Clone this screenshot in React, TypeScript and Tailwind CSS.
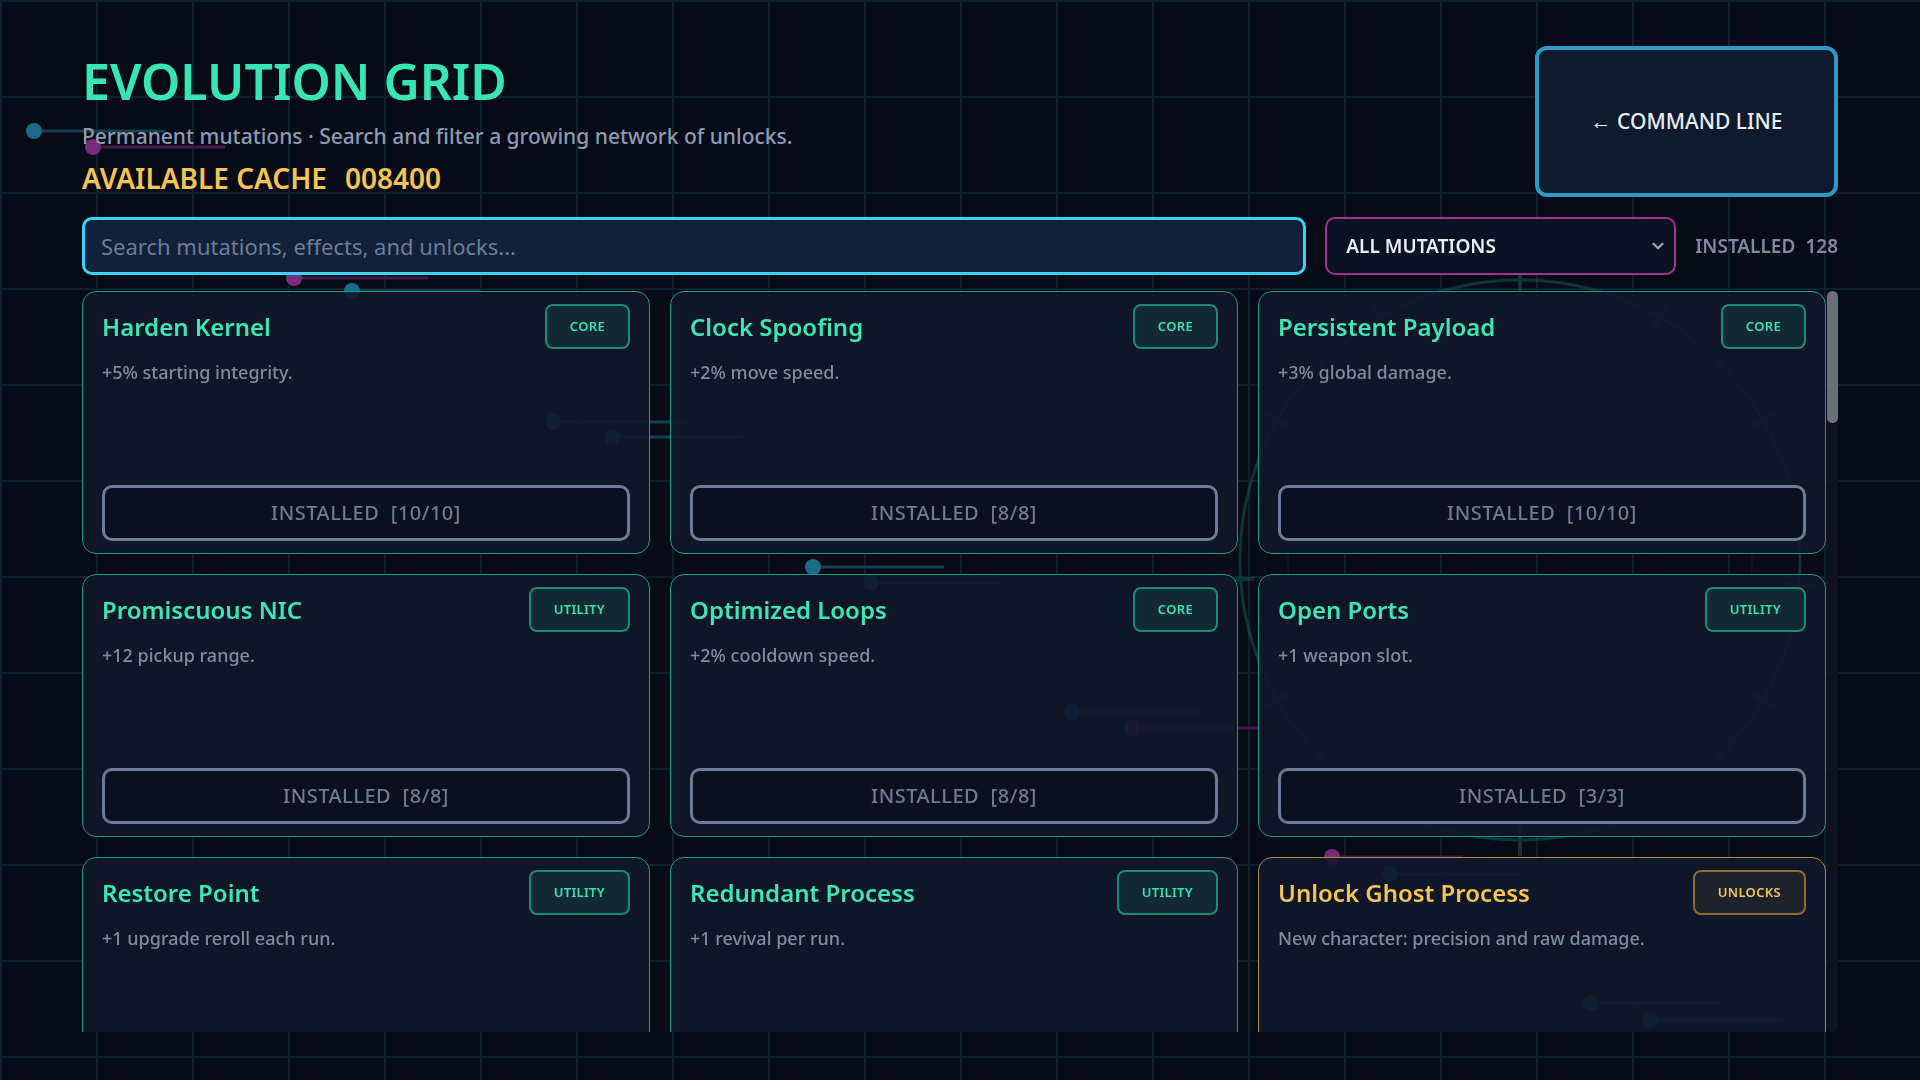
import { ChevronDown } from "lucide-react";

type Kind = "CORE" | "UTILITY" | "UNLOCKS";

interface Mutation {
  name: string;
  effect: string;
  kind: Kind;
  rank: number;
  max: number;
}

const MUTATIONS: Mutation[] = [
  { name: "Harden Kernel", effect: "+5% starting integrity.", kind: "CORE", rank: 10, max: 10 },
  { name: "Clock Spoofing", effect: "+2% move speed.", kind: "CORE", rank: 8, max: 8 },
  { name: "Persistent Payload", effect: "+3% global damage.", kind: "CORE", rank: 10, max: 10 },
  { name: "Promiscuous NIC", effect: "+12 pickup range.", kind: "UTILITY", rank: 8, max: 8 },
  { name: "Optimized Loops", effect: "+2% cooldown speed.", kind: "CORE", rank: 8, max: 8 },
  { name: "Open Ports", effect: "+1 weapon slot.", kind: "UTILITY", rank: 3, max: 3 },
  { name: "Restore Point", effect: "+1 upgrade reroll each run.", kind: "UTILITY", rank: 5, max: 5 },
  { name: "Redundant Process", effect: "+1 revival per run.", kind: "UTILITY", rank: 2, max: 2 },
  { name: "Unlock Ghost Process", effect: "New character: precision and raw damage.", kind: "UNLOCKS", rank: 1, max: 1 },
  { name: "Cache Prefetch", effect: "+4% experience gain.", kind: "CORE", rank: 10, max: 10 },
  { name: "Packet Sniffer", effect: "+5% critical chance.", kind: "CORE", rank: 6, max: 6 },
  { name: "Garbage Collector", effect: "Shards decay 10% slower.", kind: "UTILITY", rank: 4, max: 4 },
  { name: "Overclocked Bus", effect: "+3% projectile speed.", kind: "CORE", rank: 8, max: 8 },
  { name: "Unlock Root Shell", effect: "New weapon: recursive fork bomb.", kind: "UNLOCKS", rank: 1, max: 1 },
  { name: "Checksum Shield", effect: "+1 armor.", kind: "CORE", rank: 5, max: 5 },
  { name: "Heap Spray", effect: "+1 projectile count.", kind: "CORE", rank: 3, max: 3 },
  { name: "Swap Partition", effect: "+10% pickup duration.", kind: "UTILITY", rank: 4, max: 4 },
  { name: "Thread Pool", effect: "+1 orbital drone.", kind: "UTILITY", rank: 2, max: 2 },
  { name: "Unlock Daemon Mode", effect: "New stage: the abandoned mainframe.", kind: "UNLOCKS", rank: 1, max: 1 },
  { name: "Buffer Overflow", effect: "+6% area size.", kind: "CORE", rank: 6, max: 6 },
  { name: "Entropy Source", effect: "+2 luck.", kind: "UTILITY", rank: 5, max: 5 },
  { name: "Kernel Panic", effect: "+15% damage below 25% integrity.", kind: "CORE", rank: 4, max: 4 },
  { name: "Firewall Rules", effect: "-4% damage taken.", kind: "CORE", rank: 8, max: 8 },
  { name: "Load Balancer", effect: "Healing spreads to nearby drones.", kind: "UTILITY", rank: 3, max: 3 },
  { name: "Unlock Null Pointer", effect: "New character: speed and ricochets.", kind: "UNLOCKS", rank: 1, max: 1 },
  { name: "Hot Patch", effect: "+1% integrity regeneration.", kind: "CORE", rank: 10, max: 10 },
  { name: "Bit Rot", effect: "Enemies take 5% more damage over time.", kind: "CORE", rank: 5, max: 5 },
  { name: "Proxy Chain", effect: "+1 dash charge.", kind: "UTILITY", rank: 2, max: 2 },
  { name: "Zero Day", effect: "+8% damage against elites.", kind: "CORE", rank: 6, max: 6 },
  { name: "Dead Drop", effect: "+10% cache from chests.", kind: "UTILITY", rank: 5, max: 5 },
  { name: "Unlock Mirror Site", effect: "New mode: twin arenas.", kind: "UNLOCKS", rank: 1, max: 1 },
  { name: "Fork Process", effect: "+1 summon limit.", kind: "UTILITY", rank: 3, max: 3 },
  { name: "Side Channel", effect: "+3% dodge chance.", kind: "CORE", rank: 5, max: 5 },
  { name: "Rainbow Table", effect: "+1 banish each run.", kind: "UTILITY", rank: 3, max: 3 },
  { name: "Trace Route", effect: "Reveal elites on the map.", kind: "UTILITY", rank: 1, max: 1 },
  { name: "Salted Hash", effect: "+6% status effect duration.", kind: "CORE", rank: 6, max: 6 },
  { name: "Unlock Honeypot", effect: "New relic: bait beacon.", kind: "UNLOCKS", rank: 1, max: 1 },
  { name: "Race Condition", effect: "+5% attack speed.", kind: "CORE", rank: 8, max: 8 },
  { name: "Memory Leak", effect: "Enemies drop 5% more shards.", kind: "UTILITY", rank: 4, max: 4 },
  { name: "Stack Canary", effect: "Survive one fatal hit per stage.", kind: "CORE", rank: 1, max: 1 },
  { name: "Shadow Copy", effect: "+1 skip each run.", kind: "UTILITY", rank: 3, max: 3 },
  { name: "Brute Force", effect: "+10% knockback.", kind: "CORE", rank: 5, max: 5 },
  { name: "Unlock Sandbox", effect: "New mode: endless simulation.", kind: "UNLOCKS", rank: 1, max: 1 },
  { name: "Port Knocking", effect: "+1 starting shard magnet.", kind: "UTILITY", rank: 2, max: 2 },
];

const TONES: Record<Kind, { card: string; title: string; badge: string }> = {
  CORE: {
    card: "border-[#1e9a83]",
    title: "text-[#3ee6b5]",
    badge: "border-[#1d8a74] bg-[#112a33] text-[#3fe0b0]",
  },
  UTILITY: {
    card: "border-[#1e9a83]",
    title: "text-[#3ee6b5]",
    badge: "border-[#1d8a74] bg-[#112a33] text-[#3fe0b0]",
  },
  UNLOCKS: {
    card: "border-[#b08a3e]",
    title: "text-[#f5c453]",
    badge: "border-[#8d6d31] bg-[#1e222b] text-[#f3c65b]",
  },
};

// circuit nodes drawn behind the panels: [x, y, lineEnd, colour]
const NODES: [number, number, number, "teal" | "pink"][] = [
  [34, 131, 165, "teal"],
  [93, 147, 225, "pink"],
  [294, 278, 428, "pink"],
  [352, 291, 480, "teal"],
  [553, 422, 685, "teal"],
  [612, 437, 743, "teal"],
  [813, 567, 944, "teal"],
  [871, 583, 1002, "teal"],
  [1072, 712, 1203, "teal"],
  [1132, 728, 1258, "pink"],
  [1332, 857, 1463, "pink"],
  [1390, 874, 1523, "teal"],
  [1591, 1003, 1721, "teal"],
  [1650, 1020, 1782, "teal"],
];

function Circuitry() {
  const ticks = [-90, -60, -120, -30, -150, 5, 176, 30, 150, 60, 120, 90];
  return (
    <svg
      className="pointer-events-none absolute left-0 top-0"
      width={1920}
      height={1080}
      viewBox="0 0 1920 1080"
    >
      <g opacity={0.42}>
        <circle cx={1520} cy={560} r={280} fill="none" stroke="#1a6a62" strokeWidth={3} />
        <circle cx={1520} cy={560} r={232} fill="none" stroke="#1a6a62" strokeWidth={1.5} opacity={0.35} />
        {ticks.map((a) => {
          const rad = (a * Math.PI) / 180;
          return (
            <line
              key={a}
              x1={1520 + Math.cos(rad) * 266}
              y1={560 + Math.sin(rad) * 266}
              x2={1520 + Math.cos(rad) * 296}
              y2={560 + Math.sin(rad) * 296}
              stroke="#1a6a62"
              strokeWidth={4}
            />
          );
        })}
      </g>
      {NODES.map(([x, y, end, c]) => (
        <g key={`${x}-${y}`}>
          <line
            x1={x}
            y1={y}
            x2={end}
            y2={y}
            stroke={c === "teal" ? "#14404f" : "#43184a"}
            strokeWidth={3}
          />
          <circle cx={x} cy={y} r={8} fill={c === "teal" ? "#1c6b86" : "#7c2a7a"} />
        </g>
      ))}
    </svg>
  );
}

function MutationCard({ m }: { m: Mutation }) {
  const tone = TONES[m.kind];
  return (
    <article
      className={`flex h-[263px] flex-col rounded-[14px] border bg-[#0f172a]/90 px-[19px] py-3 ${tone.card}`}
    >
      <div className="flex items-center justify-between">
        <h2 className={`text-[24px] font-semibold leading-8 ${tone.title}`}>{m.name}</h2>
        <span
          className={`flex h-[45px] items-center rounded-lg border-2 px-[23px] text-[13px] font-semibold tracking-wide ${tone.badge}`}
        >
          {m.kind}
        </span>
      </div>
      <p className="mt-[10px] text-[18px] font-medium leading-[26px] text-[#7f8ca3]">{m.effect}</p>
      <button className="mt-auto h-[56px] w-full shrink-0 rounded-[10px] border-[3px] border-[#6c7b99] bg-[#0a1020] text-[20px] font-medium tracking-wide text-[#717b8d]">
        INSTALLED&nbsp;&nbsp;[{m.rank}/{m.max}]
      </button>
    </article>
  );
}

export default function App() {
  return (
    <div className="relative h-screen w-full overflow-hidden bg-[#070b18] font-['Noto_Sans',sans-serif]">
      <div className="pointer-events-none absolute inset-0 bg-[linear-gradient(to_right,#0e1f2d_2px,transparent_2px),linear-gradient(to_bottom,#0e1f2d_2px,transparent_2px)] bg-[size:96px_96px]" />
      <Circuitry />

      <main className="relative flex h-full flex-col px-[82px] pb-[48px] pt-[46px]">
        <header className="flex items-start justify-between">
          <div className="pt-[5px]">
            <h1 className="text-[50px] font-semibold leading-[60px] text-[#37e6b4]">EVOLUTION GRID</h1>
            <p className="mt-[11px] text-[21px] font-medium leading-[28px] text-[#8b9bb3]">
              Permanent mutations · Search and filter a growing network of unlocks.
            </p>
            <div className="mt-[10px] flex gap-[18px] text-[28px] font-semibold leading-[36px] text-[#f6c453]">
              <span>AVAILABLE CACHE</span>
              <span>008400</span>
            </div>
          </div>
          <button className="flex h-[151px] w-[303px] items-center justify-center rounded-xl border-4 border-[#2a9cc4] bg-[#0f1a2e] text-[21px] font-medium text-[#e8eef6]">
            ← COMMAND LINE
          </button>
        </header>

        <div className="mt-5 flex h-[58px] items-center gap-[19px]">
          <input
            autoFocus
            placeholder="Search mutations, effects, and unlocks..."
            className="h-full min-w-0 flex-1 rounded-[10px] border-[3px] border-[#3cd3f7] bg-[#12203a] px-4 text-[22px] text-[#e6edf5] caret-[#e6edf5] outline-none placeholder:text-[#6b7d97]"
          />
          <div className="relative h-full w-[351px]">
            <select className="h-full w-full appearance-none rounded-[10px] border-2 border-[#a1348c] bg-[#0b1224] pl-[19px] text-[19px] font-semibold text-[#e8eef6] outline-none">
              <option>ALL MUTATIONS</option>
              <option>CORE</option>
              <option>UTILITY</option>
              <option>UNLOCKS</option>
            </select>
            <ChevronDown
              className="pointer-events-none absolute right-[9px] top-1/2 size-[18px] -translate-y-1/2 text-[#9aa4b6]"
              strokeWidth={3}
            />
          </div>
          <div className="flex gap-[10px] text-[19px] font-semibold text-[#7d8ba3]">
            <span>INSTALLED</span>
            <span>128</span>
          </div>
        </div>

        <div className="mt-4 flex min-h-0 flex-1 gap-[1px]">
          <div className="min-h-0 flex-1 overflow-y-auto">
            <div className="grid grid-cols-3 gap-5">
              {MUTATIONS.map((m) => (
                <MutationCard key={m.name} m={m} />
              ))}
            </div>
          </div>
          {/* scroll rail */}
          <div className="w-[11px] rounded-full bg-[#0e121d]">
            <div className="h-[132px] rounded-full bg-[#6b6f78]" />
          </div>
        </div>
      </main>
    </div>
  );
}
